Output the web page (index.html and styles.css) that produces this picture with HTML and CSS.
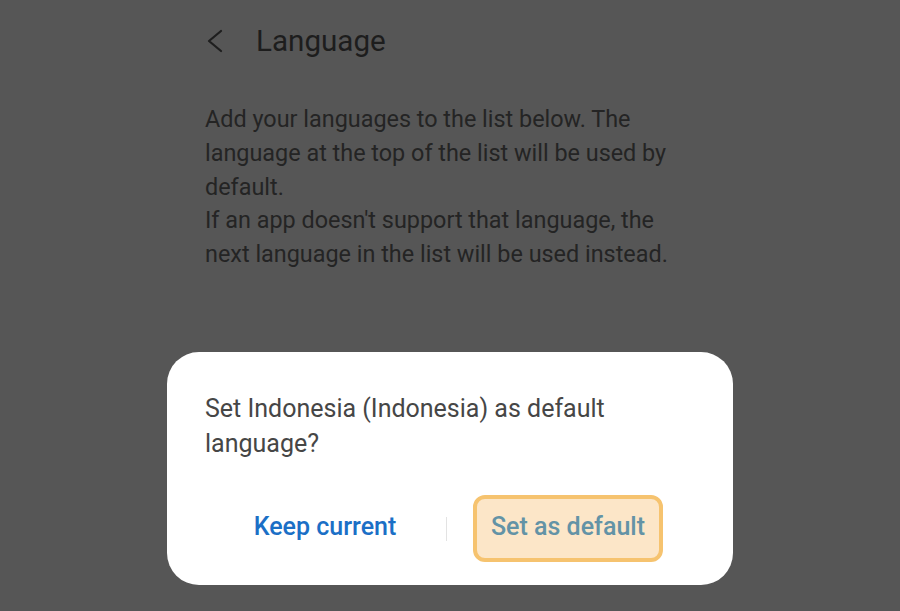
FILE: index.html
```html
<!DOCTYPE html>
<html lang="en">
<head>
<meta charset="utf-8">
<title>Language</title>
<link rel="stylesheet" href="styles.css">
</head>
<body>
<div class="screen">
  <header class="header">
    <svg class="back" width="20" height="26" viewBox="0 0 20 26" aria-hidden="true">
      <polyline points="15,3 3,13 15,23" fill="none" stroke="#1e1e1e" stroke-width="2.2" stroke-linecap="round" stroke-linejoin="round"/>
    </svg>
    <h1 class="title">Language</h1>
  </header>
  <div class="desc">
    <p>Add your languages to the list below. The language at the top of the list will be used by default.</p>
    <p>If an app doesn't support that language, the next language in the list will be used instead.</p>
  </div>
  <div class="dialog">
    <p class="dialog-text">Set Indonesia (Indonesia) as default language?</p>
    <div class="actions">
      <div class="action"><span class="btn btn-keep">Keep current</span></div>
      <div class="divider"></div>
      <div class="action"><span class="btn btn-set">Set as default</span></div>
    </div>
  </div>
</div>
</body>
</html>
```
FILE: styles.css
```css
html, body {
  margin: 0;
  padding: 0;
}
body {
  background: #565656;
  font-family: Roboto, "Noto Sans", sans-serif;
}
.screen {
  width: 900px;
  height: 611px;
  overflow: hidden;
  position: relative;
}
.header {
  display: flex;
  align-items: center;
  padding: 21px 0 0 206px;
  height: 40px;
}
.back {
  display: block;
}
.title {
  margin: 0 0 0 30px;
  font-size: 29.6px;
  font-weight: 400;
  line-height: 40px;
  color: #1d1d1d;
}
.desc {
  margin: 42px 0 0 205px;
  width: 480px;
  color: #242424;
  font-size: 23.4px;
  line-height: 33.75px;
}
.desc p {
  margin: 0;
}
.dialog {
  position: absolute;
  left: 167px;
  top: 352px;
  width: 566px;
  height: 233px;
  box-sizing: border-box;
  background: #ffffff;
  border-radius: 32px;
  padding: 39px 44px 0 37px;
}
.dialog-text {
  margin: 0 0 0 1px;
  font-size: 25px;
  line-height: 35px;
  color: #464646;
}
.actions {
  display: grid;
  grid-template-columns: 1fr 1px 1fr;
  align-items: center;
  margin-top: 34px;
}
.action {
  display: flex;
  justify-content: center;
}
.divider {
  width: 1px;
  height: 24px;
  background: #e3e3e3;
}
.btn {
  font-size: 25px;
  font-weight: 500;
  line-height: 35px;
}
.btn-keep {
  color: #1b6fc6;
  padding-bottom: 4px;
}
.btn-set {
  color: #6393a6;
  background: #fce6c8;
  border: 4px solid #f6c36f;
  border-radius: 12px;
  padding: 10px 14px 14px;
  text-align: center;
}
```
